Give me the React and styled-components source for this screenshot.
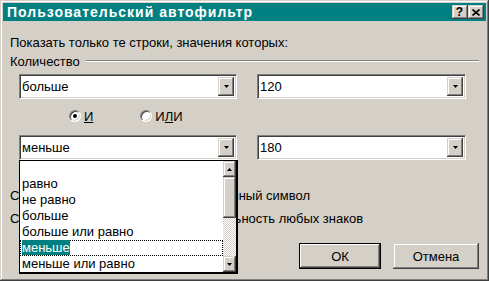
import React from "react";
import styled, { createGlobalStyle } from "styled-components";

const GlobalStyle = createGlobalStyle`
    body {
        margin: 0;
        background: #d4d0c8;
    }
`;

const raised = `
    background: #d4d0c8;
    box-shadow: inset -1px -1px #404040, inset 1px 1px #d4d0c8, inset -2px -2px #808080, inset 2px 2px #ffffff;
`;

const Window = styled.div`
    position: relative;
    width: 489px;
    height: 281px;
    box-sizing: border-box;
    padding: 3px;
    ${raised}
    display: flex;
    flex-direction: column;
    font-family: "Liberation Sans", Arial, sans-serif;
    font-size: 13px;
    color: #000;
    overflow: hidden;
`;

const TitleBar = styled.div`
    height: 18px;
    background: #008080;
    display: flex;
    align-items: center;
    justify-content: space-between;
    padding: 0 2px 0 4px;
`;

const TitleText = styled.span`
    color: #fff;
    font-weight: 700;
    font-size: 14px;
    letter-spacing: 1px;
    line-height: 18px;
`;

const TitleButtons = styled.div`
    display: flex;
`;

const TitleButton = styled.div`
    width: 16px;
    height: 14px;
    box-sizing: border-box;
    ${raised}
    display: flex;
    align-items: center;
    justify-content: center;
    font-weight: 700;
    font-size: 12px;
    line-height: 14px;
    padding-right: 1px;
`;

const Body = styled.div`
    flex: 1;
    display: flex;
    flex-direction: column;
    padding-left: 7px;
`;

const TextLine = styled.div`
    height: 16px;
    line-height: 16px;
    margin-top: ${p => p.$mt || 0}px;
    white-space: nowrap;
`;

const GroupHeader = styled.div`
    display: flex;
    align-items: center;
    height: 16px;
    margin-top: 2px;
    margin-right: 7px;
    gap: 6px;
`;

const Groove = styled.div`
    flex: 1;
    height: 0;
    border-top: 1px solid #808080;
    border-bottom: 1px solid #ffffff;
`;

const ComboRow = styled.div`
    display: flex;
    gap: 20px;
    padding-left: 9px;
    margin-top: ${p => p.$mt}px;
`;

const ComboWrap = styled.div`
    position: relative;
    z-index: ${p => (p.$open ? 2 : 1)};
`;

const ComboBox = styled.div`
    width: ${p => p.$w}px;
    height: 25px;
    box-sizing: border-box;
    background: #fff;
    border: 1px solid;
    border-color: #808080 #ffffff #ffffff #808080;
    box-shadow: inset 1px 1px #404040, inset -1px -1px #d4d0c8;
    padding: 2px;
    display: flex;
    align-items: stretch;
`;

const ComboValue = styled.div`
    flex: 1;
    line-height: 19px;
`;

const ArrowButton = styled.div`
    width: ${p => p.$w || 16}px;
    height: ${p => p.$h ? `${p.$h}px` : "auto"};
    box-sizing: border-box;
    ${raised}
    display: flex;
    align-items: center;
    justify-content: center;
    flex-shrink: 0;
`;

const RadioRow = styled.div`
    display: flex;
    align-items: center;
    height: 16px;
    margin-top: 9px;
    padding-left: 59px;
    gap: 47px;
`;

const RadioLabel = styled.label`
    display: flex;
    align-items: center;
    gap: 3px;
`;

const RadioCircle = styled.span`
    width: 12px;
    height: 12px;
    box-sizing: border-box;
    border-radius: 50%;
    background: #fff;
    border: 1px solid;
    border-color: #808080 #ffffff #ffffff #808080;
    box-shadow: inset 1px 1px #404040, inset -1px -1px #d4d0c8;
    display: flex;
    align-items: center;
    justify-content: center;

    &::after {
        content: "";
        width: 4px;
        height: 4px;
        border-radius: 50%;
        background: ${p => (p.$checked ? "#000" : "transparent")};
    }
`;

const DropList = styled.div`
    position: absolute;
    top: 100%;
    left: 0;
    width: 219px;
    height: 114px;
    box-sizing: border-box;
    border: 1px solid #000;
    border-right-width: 2px;
    border-bottom-width: 2px;
    background: #fff;
    display: flex;
`;

const Items = styled.div`
    flex: 1;
    display: flex;
    flex-direction: column;
`;

const Item = styled.div`
    height: 16px;
    line-height: 14px;
    box-sizing: border-box;
    padding-left: 1px;
    border: 1px dotted ${p => (p.$selected ? "#000" : "transparent")};
    white-space: nowrap;

    span {
        background: ${p => (p.$selected ? "#008080" : "transparent")};
        color: ${p => (p.$selected ? "#fff" : "#000")};
    }
`;

const ScrollBar = styled.div`
    width: 13px;
    display: flex;
    flex-direction: column;
`;

const Thumb = styled.div`
    height: 41px;
    ${raised}
`;

const Track = styled.div`
    flex: 1;
    background-color: #fff;
    background-image: repeating-conic-gradient(#d4d0c8 0 25%, #ffffff 0 50%);
    background-size: 2px 2px;
`;

const ButtonRow = styled.div`
    display: flex;
    justify-content: flex-end;
    gap: 12px;
    margin-top: 16px;
    margin-right: 7px;
`;

const Button = styled.button`
    width: ${p => p.$w}px;
    height: 26px;
    box-sizing: border-box;
    border: none;
    ${raised}
    ${p => p.$default && "outline: 1px solid #000; outline-offset: -1px; box-shadow: inset -2px -2px #404040, inset 2px 2px #ffffff, inset -3px -3px #808080;"}
    font-family: inherit;
    font-size: 13px;
    color: #000;
    padding: 0;
`;

function Arrow({ up }) {
    return (
        <svg width="5" height="3" viewBox="0 0 5 3">
            <polygon points={up ? "2.5,0 5,3 0,3" : "0,0 5,0 2.5,3"} fill="#000" />
        </svg>
    );
}

function Combo({ width, value, children, open }) {
    return (
        <ComboWrap $open={open}>
            <ComboBox $w={width}>
                <ComboValue>{value}</ComboValue>
                <ArrowButton><Arrow /></ArrowButton>
            </ComboBox>
            {children}
        </ComboWrap>
    );
}

const options = ["", "равно", "не равно", "больше", "больше или равно", "меньше", "меньше или равно"];

export default function App() {
    return (
        <>
            <GlobalStyle />
            <Window>
                <TitleBar>
                    <TitleText>Пользовательский автофильтр</TitleText>
                    <TitleButtons>
                        <TitleButton>?</TitleButton>
                        <TitleButton>
                            <svg width="8" height="7" viewBox="0 0 8 7">
                                <path d="M0.5 0.5 L7.5 6.5 M7.5 0.5 L0.5 6.5" stroke="#000" strokeWidth="1.6" />
                            </svg>
                        </TitleButton>
                    </TitleButtons>
                </TitleBar>
                <Body>
                    <TextLine $mt={14}>Показать только те строки, значения которых:</TextLine>
                    <GroupHeader>
                        <span>Количество</span>
                        <Groove />
                    </GroupHeader>
                    <ComboRow $mt={5}>
                        <Combo width={218} value="больше" />
                        <Combo width={209} value="120" />
                    </ComboRow>
                    <RadioRow>
                        <RadioLabel>
                            <RadioCircle $checked />
                            <span><u>И</u></span>
                        </RadioLabel>
                        <RadioLabel>
                            <RadioCircle />
                            <span>И<u>Л</u>И</span>
                        </RadioLabel>
                    </RadioRow>
                    <ComboRow $mt={11}>
                        <Combo width={218} value="меньше" open>
                            <DropList>
                                <Items>
                                    {options.map((o, i) => (
                                        <Item key={i} $selected={o === "меньше"}>
                                            <span>{o}</span>
                                        </Item>
                                    ))}
                                </Items>
                                <ScrollBar>
                                    <ArrowButton $w={13} $h={16}><Arrow up /></ArrowButton>
                                    <Thumb />
                                    <Track />
                                    <ArrowButton $w={13} $h={16}><Arrow /></ArrowButton>
                                </ScrollBar>
                            </DropList>
                        </Combo>
                        <Combo width={209} value="180" />
                    </ComboRow>
                    <TextLine $mt={28}>Символ "?" обозначает любой единичный символ</TextLine>
                    <TextLine $mt={7}>Символ "*" обозначает последовательность любых знаков</TextLine>
                    <ButtonRow>
                        <Button $w={82} $default>ОК</Button>
                        <Button $w={86}>Отмена</Button>
                    </ButtonRow>
                </Body>
            </Window>
        </>
    );
}
